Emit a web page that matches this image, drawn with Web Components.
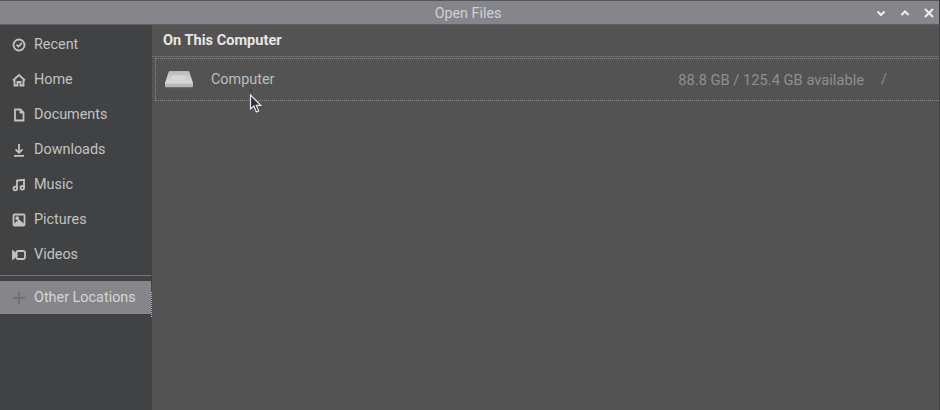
<!DOCTYPE html>
<html>
<head>
<meta charset="utf-8">
<title>Open Files</title>
<style>
  html, body { margin: 0; height: 100%; background: #535353; overflow: hidden; }
  body { font-family: Roboto, "Liberation Sans", sans-serif; }
</style>
</head>
<body>
<file-window>
  <title-bar slot="title">Open Files</title-bar>
  <side-bar slot="side">
    <side-item icon="recent">Recent</side-item>
    <side-item icon="home">Home</side-item>
    <side-item icon="doc">Documents</side-item>
    <side-item icon="down">Downloads</side-item>
    <side-item icon="music">Music</side-item>
    <side-item icon="pic">Pictures</side-item>
    <side-item icon="video">Videos</side-item>
    <side-item icon="plus" selected>Other Locations</side-item>
  </side-bar>
  <places-view slot="main">
    <place-row name="Computer" size="88.8 GB / 125.4 GB available" path="/"></place-row>
  </places-view>
</file-window>
<script>
  class FileWindow extends HTMLElement {
    constructor() {
      super();
      this.attachShadow({ mode: 'open' }).innerHTML = `
        <style>
          :host { display: grid; grid-template: 25px 385px / 152px 787px; width: 940px; height: 410px;
                  box-sizing: border-box; border-right: 1px solid #3f3f41; }
          .t { grid-column: 1 / 3; display: block; }
        </style>
        <div class="t"><slot name="title"></slot></div>
        <slot name="side"></slot>
        <slot name="main"></slot>`;
    }
  }

  class TitleBar extends HTMLElement {
    constructor() {
      super();
      this.attachShadow({ mode: 'open' }).innerHTML = `
        <style>
          :host { display: flex; box-sizing: border-box; height: 25px; align-items: center; justify-content: flex-end;
                  position: relative; background: #85858b; border-top: 1px solid #55565a; border-bottom: 1px solid #5f5f62; }
          .name { position: absolute; left: 0; right: 3px; text-align: center; font-size: 14.3px; color: #d0d0d2; }
          .btns { display: flex; gap: 8px; padding-right: 2px; }
          svg { width: 16px; height: 16px; fill: none; stroke: #eeeeee; stroke-width: 2; display: block; }
        </style>
        <div class="name"><slot></slot></div>
        <div class="btns">
          <svg viewBox="0 0 16 16"><path d="M4.5 6.5 8 10l3.5-3.5"/></svg>
          <svg viewBox="0 0 16 16"><path d="M4.5 10 8 6.5l3.5 3.5"/></svg>
          <svg viewBox="0 0 16 16"><path d="M4 4l8 8M12 4l-8 8"/></svg>
        </div>`;
    }
  }

  class SideBar extends HTMLElement {
    constructor() {
      super();
      this.attachShadow({ mode: 'open' }).innerHTML = `
        <style>
          :host { display: flex; flex-direction: column; background: #414244; padding-top: 2px; height: 385px; box-sizing: border-box; }
        </style>
        <slot></slot>`;
    }
  }

  const ICONS = {
    recent: '<circle cx="7" cy="7" r="5.5"/><path d="M4.5 6.8 6.6 8.6 9.8 4.8"/>',
    home: '<path d="M1 7.5 7 2l6 5.5"/><path d="M2.5 7v5.5h3V9h3v3.5h3V7"/>',
    doc: '<path d="M3 1.5h5.5L11.5 4.5V12.5H3z"/><path d="M8.5 1.5V4.5H11.5"/>',
    down: '<path d="M7 1v8.5M3.5 6.3 7 9.8l3.5-3.5M2 12.8h10"/>',
    music: '<path d="M5 10V2.5L12 1.8V9.5"/><circle cx="3.3" cy="10.5" r="1.8"/><circle cx="10.3" cy="9.8" r="1.8"/>',
    pic: '<rect x="1.5" y="1.5" width="11" height="11" rx="1"/><circle cx="5.2" cy="5.2" r="1" fill="#c2c2c2"/><path d="M3 11 7 7.5l4 3.5z" fill="#c2c2c2"/>',
    video: '<rect x="4.5" y="3" width="8.5" height="8" rx="1.5"/><path d="M1 3.5 4.5 6.5v1L1 10.5z" fill="#c2c2c2"/>',
    plus: '<path d="M7 1v12M1 7h12" stroke="#6f6f73"/>'
  };

  class SideItem extends HTMLElement {
    constructor() {
      super();
      this.attachShadow({ mode: 'open' }).innerHTML = `
        <style>
          :host { display: flex; align-items: center; gap: 8px; height: 35px; padding-left: 12px; box-sizing: border-box;
                  color: #c2c2c2; font-size: 14.4px; }
          :host([selected]) { height: 33px; margin-top: 9px; width: 151px; background: #85858b; color: #d6d6d8;
                              position: relative; }
          :host([selected])::before { content: ""; position: absolute; left: 0; right: 0; top: -6px; height: 1px; background: #77777a; }
          :host([selected])::after { content: ""; position: absolute; right: -1px; top: 11px; bottom: -3px; border-right: 1px dotted #b4b4b8; }
          svg { width: 14px; height: 14px; fill: none; stroke: #c2c2c2; stroke-width: 1.8; flex: none; }
        </style>
        <svg viewBox="0 0 14 14">${ICONS[this.getAttribute('icon')] || ''}</svg>
        <slot></slot>`;
    }
  }

  class PlacesView extends HTMLElement {
    constructor() {
      super();
      this.attachShadow({ mode: 'open' }).innerHTML = `
        <style>
          :host { display: block; background: #535353; position: relative; height: 385px; }
          h2 { margin: 0; height: 31px; padding-left: 11px; line-height: 30px; font-size: 14.6px; font-weight: 700; color: #e6e6e6; }
          .rule { height: 0; border-top: 1px solid #6d6d6d; margin-bottom: 1px; }
          .dot { position: absolute; left: 97px; top: 64px; width: 3px; height: 3px; border-radius: 50%; background: #46404a; }
          .cursor { position: absolute; left: 97px; top: 69px; width: 14px; height: 20px; }
        </style>
        <h2>On This Computer</h2>
        <div class="rule"></div>
        <slot></slot>
        <div class="dot"></div>
        <svg class="cursor" viewBox="0 0 14 20"><path d="M1.5 1v14l3.4-3 2.4 6 2.4-1-2.4-5.6h4.5z" fill="#2c2f45" stroke="#e8e8e8" stroke-width="1.2"/></svg>`;
    }
  }

  class PlaceRow extends HTMLElement {
    constructor() {
      super();
      this.attachShadow({ mode: 'open' }).innerHTML = `
        <style>
          :host { display: flex; align-items: center; height: 43px; margin-left: 3px; box-sizing: border-box;
                  border: 1px dotted #8a8a8a; border-right: 0; font-size: 14.4px; color: #bdbdbd; }
          svg { width: 30px; height: 20px; margin-left: 8px; margin-right: 17px; flex: none; }
          .size { margin-left: auto; color: #8f8f8f; font-size: 14.7px; }
          .path { width: 75px; padding-left: 17px; box-sizing: border-box; color: #8f8f8f; }
        </style>
        <svg viewBox="0 0 30 20">
          <defs><linearGradient id="g" x1="0" y1="0" x2="0" y2="1"><stop offset="0" stop-color="#b9b9b9"/><stop offset="1" stop-color="#dedede"/></linearGradient></defs>
          <path d="M6 1h18q1 0 1.400 1L29 13q.5 1.500-1 1.500H2q-1.500 0-1-1.500L4.600 2Q5 1 6 1z" fill="url(#g)"/>
          <ellipse cx="15" cy="7.500" rx="8" ry="2.600" fill="#e0e0e0" opacity=".6"/>
          <rect x="1" y="13.500" width="28" height="4" rx="1.500" fill="#b8b8b8"/>
          <rect x="2" y="17" width="26" height="1.200" fill="#6d6d6d"/>
        </svg>
        <span>${this.getAttribute('name')}</span>
        <span class="size">${this.getAttribute('size')}</span>
        <span class="path">${this.getAttribute('path')}</span>`;
    }
  }

  customElements.define('file-window', FileWindow);
  customElements.define('title-bar', TitleBar);
  customElements.define('side-bar', SideBar);
  customElements.define('side-item', SideItem);
  customElements.define('places-view', PlacesView);
  customElements.define('place-row', PlaceRow);
</script>
</body>
</html>
